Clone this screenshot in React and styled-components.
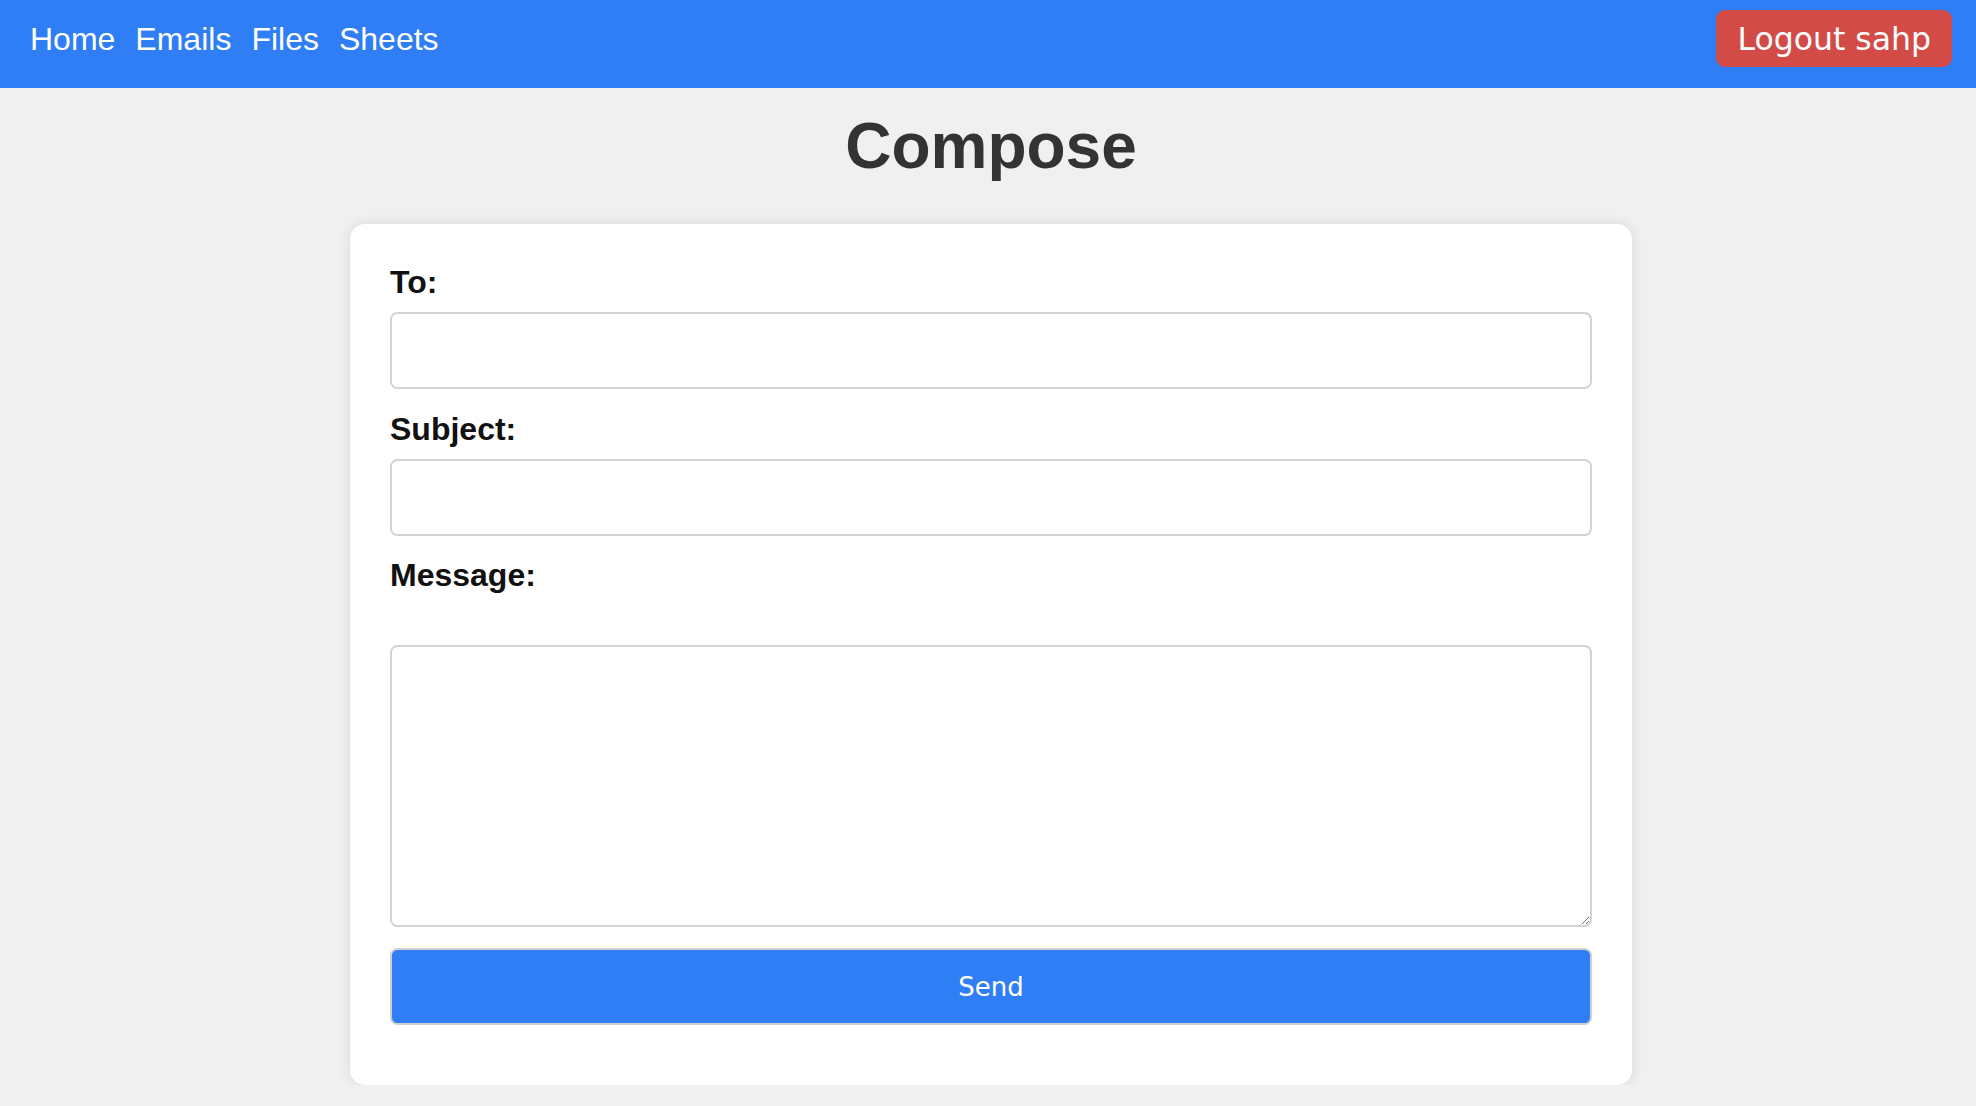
import React, { useState } from "react";
import styled, { createGlobalStyle } from "styled-components";

const GlobalStyle = createGlobalStyle`
  html, body {
    margin: 0;
    padding: 0;
    background: #f0f0f0;
    font-family: "Liberation Sans", Arial, sans-serif;
  }
  * {
    box-sizing: border-box;
  }
`;

// Top navigation bar
const Navbar = styled.nav`
  height: 88px;
  background: #2f7ef5;
  display: flex;
  align-items: center;
  justify-content: space-between;
  padding: 10px 24px 21px 30px;
`;

const NavLinks = styled.div`
  display: flex;
  gap: 20px;
  margin-top: 2px;
`;

const NavLink = styled.a`
  color: #ffffff;
  font-size: 32px;
  line-height: 37px;
  text-decoration: none;
  cursor: pointer;
  &:hover {
    text-decoration: underline;
  }
`;

const LogoutButton = styled.button`
  height: 57px;
  padding: 0 21px;
  background: #d34b47;
  color: #ffffff;
  border: none;
  border-radius: 9px;
  font-family: "DejaVu Sans", sans-serif;
  font-size: 31.5px;
  cursor: pointer;
`;

const Main = styled.main`
  display: flex;
  flex-direction: column;
  align-items: center;
  padding-left: 6px;
`;

const Title = styled.h1`
  margin: 22px 0 41px;
  font-size: 64px;
  line-height: 73px;
  font-weight: bold;
  color: #333333;
`;

const Card = styled.form`
  width: 1282px;
  background: #ffffff;
  border-radius: 15px;
  padding: 40px 40px 60px;
  box-shadow: 0 0 13px rgba(0, 0, 0, 0.1);
  display: flex;
  flex-direction: column;
`;

const Label = styled.label`
  display: block;
  font-size: 32px;
  line-height: 36px;
  font-weight: bold;
  color: #111111;
  margin-bottom: ${(props) => props.$gap || 12}px;
`;

const Input = styled.input`
  width: 100%;
  height: 77px;
  border: 2px solid #d2d2d2;
  border-radius: 7.5px;
  margin: 0 0 ${(props) => props.$gap || 22}px;
  padding: 0 12px;
  font-size: 26px;
  font-family: "Liberation Sans", Arial, sans-serif;
  outline: none;
`;

const TextArea = styled.textarea`
  width: 100%;
  height: 282px;
  border: 2px solid #d2d2d2;
  border-radius: 7.5px;
  margin: 0 0 21px;
  padding: 12px;
  font-size: 26px;
  font-family: "Liberation Sans", Arial, sans-serif;
  resize: vertical;
  outline: none;
  display: block;
`;

const SendButton = styled.button`
  width: 100%;
  height: 77px;
  background: #2f7ef5;
  color: #ffffff;
  border: 2px solid #cfcfcf;
  border-radius: 7.5px;
  font-family: "DejaVu Sans", sans-serif;
  font-size: 26px;
  cursor: pointer;
`;

export default function App() {
  const [to, setTo] = useState("");
  const [subject, setSubject] = useState("");
  const [message, setMessage] = useState("");

  return (
    <>
      <GlobalStyle />
      <Navbar>
        <NavLinks>
          <NavLink>Home</NavLink>
          <NavLink>Emails</NavLink>
          <NavLink>Files</NavLink>
          <NavLink>Sheets</NavLink>
        </NavLinks>
        <LogoutButton>Logout sahp</LogoutButton>
      </Navbar>
      <Main>
        <Title>Compose</Title>
        <Card onSubmit={(e) => e.preventDefault()}>
          <Label htmlFor="to">To:</Label>
          <Input id="to" $gap={22} value={to} onChange={(e) => setTo(e.target.value)} />
          <Label htmlFor="subject">Subject:</Label>
          <Input id="subject" $gap={21} value={subject} onChange={(e) => setSubject(e.target.value)} />
          <Label htmlFor="message" $gap={52}>Message:</Label>
          <TextArea id="message" value={message} onChange={(e) => setMessage(e.target.value)} />
          <SendButton type="submit">Send</SendButton>
        </Card>
      </Main>
    </>
  );
}
